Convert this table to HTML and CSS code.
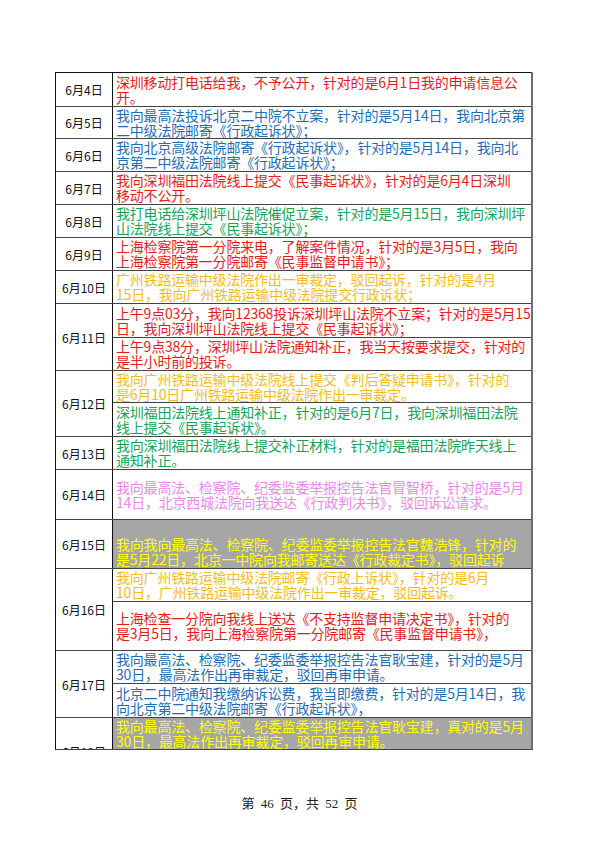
FILE: index.html
```html
<!DOCTYPE html>
<html>
<head>
  <meta charset="UTF-8">
  <title>第 46 页</title>
  <link rel="stylesheet" href="styles.css">
</head>
<body>

<div class="sheet">

  <div class="day">
    <div class="date">6月4日</div>
    <div class="notes">
      <div class="note h34 red">深圳移动打电话给我，不予公开，针对的是6月1日我的申请信息公<br>开。</div>
    </div>
  </div>

  <div class="day">
    <div class="date">6月5日</div>
    <div class="notes">
      <div class="note h32 blue">我向最高法投诉北京二中院不立案，针对的是5月14日，我向北京第<br>二中级法院邮寄《行政起诉状》；</div>
    </div>
  </div>

  <div class="day">
    <div class="date">6月6日</div>
    <div class="notes">
      <div class="note blue">我向北京高级法院邮寄《行政起诉状》，针对的是5月14日，我向北<br>京第二中级法院邮寄《行政起诉状》；</div>
    </div>
  </div>

  <div class="day">
    <div class="date">6月7日</div>
    <div class="notes">
      <div class="note red">我向深圳福田法院线上提交《民事起诉状》，针对的是6月4日深圳<br>移动不公开。</div>
    </div>
  </div>

  <div class="day">
    <div class="date">6月8日</div>
    <div class="notes">
      <div class="note green">我打电话给深圳坪山法院催促立案，针对的是5月15日，我向深圳坪<br>山法院线上提交《民事起诉状》；</div>
    </div>
  </div>

  <div class="day">
    <div class="date">6月9日</div>
    <div class="notes">
      <div class="note red">上海检察院第一分院来电，了解案件情况，针对的是3月5日，我向<br>上海检察院第一分院邮寄《民事监督申请书》；</div>
    </div>
  </div>

  <div class="day">
    <div class="date">6月10日</div>
    <div class="notes">
      <div class="note gold">广州铁路运输中级法院作出一审裁定，驳回起诉，针对的是4月<br>15日，我向广州铁路运输中级法院提交行政诉状；</div>
    </div>
  </div>

  <div class="day">
    <div class="date">6月11日</div>
    <div class="notes">
      <div class="note h34 red">上午9点03分，我向12368投诉深圳坪山法院不立案；针对的是5月15<br>日，我向深圳坪山法院线上提交《民事起诉状》；</div>
      <div class="note red">上午9点38分，深圳坪山法院通知补正，我当天按要求提交，针对的<br>是半小时前的投诉。</div>
    </div>
  </div>

  <div class="day">
    <div class="date">6月12日</div>
    <div class="notes">
      <div class="note h32 gold">我向广州铁路运输中级法院线上提交《判后答疑申请书》，针对的<br>是6月10日广州铁路运输中级法院作出一审裁定。</div>
      <div class="note h34 green">深圳福田法院线上通知补正，针对的是6月7日，我向深圳福田法院<br>线上提交《民事起诉状》。</div>
    </div>
  </div>

  <div class="day">
    <div class="date">6月13日</div>
    <div class="notes">
      <div class="note green">我向深圳福田法院线上提交补正材料，针对的是福田法院昨天线上<br>通知补正。</div>
    </div>
  </div>

  <div class="day">
    <div class="date">6月14日</div>
    <div class="notes">
      <div class="note h50 pink">我向最高法、检察院、纪委监委举报控告法官冒智桥，针对的是5月<br>14日，北京西城法院向我送达《行政判决书》，驳回诉讼请求。</div>
    </div>
  </div>

  <div class="day">
    <div class="date">6月15日</div>
    <div class="notes">
      <div class="note h49 grey bottom">我向我向最高法、检察院、纪委监委举报控告法官魏浩锋，针对的<br>是5月22日，北京一中院向我邮寄送达《行政裁定书》，驳回起诉</div>
    </div>
  </div>

  <div class="day">
    <div class="date">6月16日</div>
    <div class="notes">
      <div class="note gold">我向广州铁路运输中级法院邮寄《行政上诉状》，针对的是6月<br>10日，广州铁路运输中级法院作出一审裁定，驳回起诉。</div>
      <div class="note h49 red">上海检查一分院向我线上送达《不支持监督申请决定书》，针对的<br>是3月5日，我向上海检察院第一分院邮寄《民事监督申请书》，</div>
    </div>
  </div>

  <div class="day">
    <div class="date">6月17日</div>
    <div class="notes">
      <div class="note blue">我向最高法、检察院、纪委监委举报控告法官耿宝建，针对的是5月<br>30日，最高法作出再审裁定，驳回再审申请。</div>
      <div class="note h34 blue">北京二中院通知我缴纳诉讼费，我当即缴费，针对的是5月14日，我<br>向北京第二中级法院邮寄《行政起诉状》，</div>
    </div>
  </div>

  <div class="day">
    <div class="date">6月18日</div>
    <div class="notes">
      <div class="note grey">我向最高法、检察院、纪委监委举报控告法官耿宝建，真对的是5月<br>30日，最高法作出再审裁定，驳回再审申请。</div>
      <div class="note h35"></div>
    </div>
  </div>

</div>

<div class="footer">第 46 页，共 52 页</div>

</body>
</html>
```

FILE: styles.css
```css
body {
  margin: 0;
  background: #fff;
  font-family: "Noto Sans CJK SC", "Noto Sans", sans-serif;
}

.sheet {
  box-sizing: border-box;
  width: 478px;
  height: 678px;
  margin: 72px 0 0 55px;
  overflow: hidden;
  border-left: 1px solid #111;
  border-right: 2px solid #6e6e6e;
  border-bottom: 1px solid #444;
}

.day {
  display: flex;
  border-top: 1px solid #444;
}
.day:first-child {
  border-top-color: #111;
}

.date {
  box-sizing: border-box;
  width: 57px;
  flex: none;
  display: flex;
  align-items: center;
  justify-content: center;
  border-right: 1px solid #111;
  font-size: 12px;
  color: #111;
}

.notes {
  flex: 1;
  display: flex;
  flex-direction: column;
}

.note {
  box-sizing: border-box;
  height: 32px;
  padding: 0 3px;
  display: flex;
  flex-direction: column;
  justify-content: center;
  overflow: hidden;
  white-space: nowrap;
  font-size: 14px;
  line-height: 15px;
  letter-spacing: -0.2px;
}
.note + .note {
  border-top: 1px solid #444;
  height: 33px;
}

.note.h32 { height: 31px; }
.note.h34 { height: 33px; }
.note + .note.h34 { height: 34px; }
.note.h49 { height: 48px; }
.note + .note.h49 { height: 49px; }
.note.h50 { height: 49px; }
.note + .note.h35 { height: 35px; }

.note.bottom {
  justify-content: flex-end;
  padding-bottom: 1px;
}

.red   { color: #e31c1c; }
.blue  { color: #1f6db5; }
.green { color: #15a35b; }
.gold  { color: #f2bd1c; }
.pink  { color: #e88ae6; }
.grey  {
  background: #a6a6a6;
  color: #ffff00;
}

.footer {
  margin-top: 45px;
  text-align: center;
  font-family: "Liberation Serif", "Noto Sans CJK SC", serif;
  font-size: 13px;
  line-height: 17px;
  color: #222;
  word-spacing: 3px;
}
```
